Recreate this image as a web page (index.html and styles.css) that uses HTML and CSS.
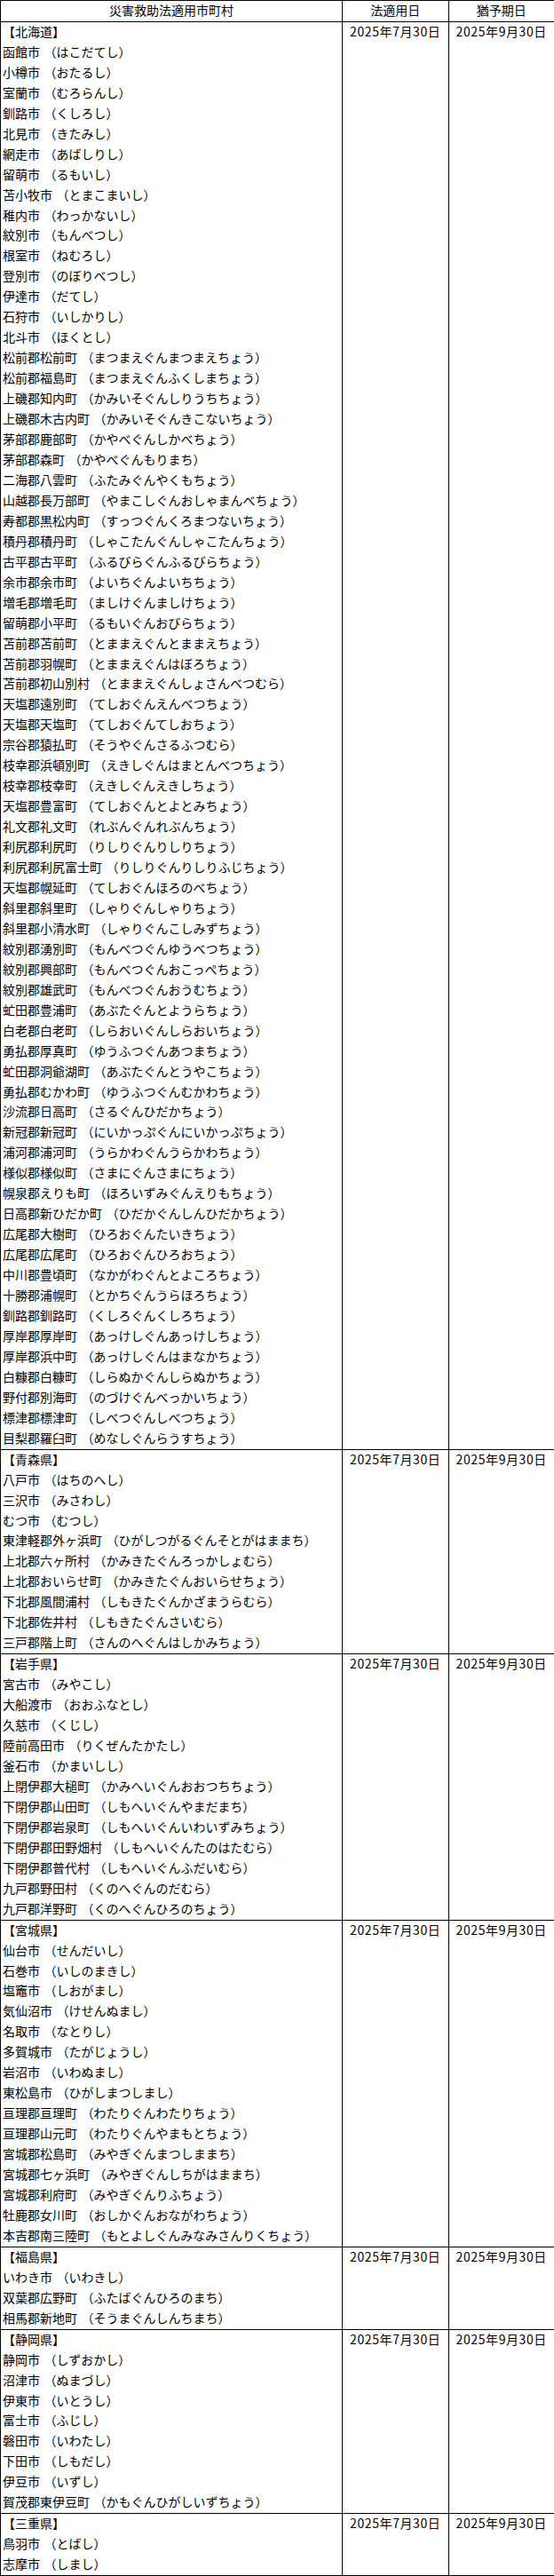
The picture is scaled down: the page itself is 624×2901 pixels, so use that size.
FILE: index.html
```html
<!DOCTYPE html>
<html lang="ja">
<head>
<meta charset="utf-8">
<title>災害救助法適用市町村</title>
<link rel="stylesheet" href="styles.css">
</head>
<body>
<table class="grid">
  <colgroup>
    <col class="c-name">
    <col class="c-date">
    <col class="c-date">
  </colgroup>
  <thead>
    <tr>
      <th>災害救助法適用市町村</th>
      <th>法適用日</th>
      <th>猶予期日</th>
    </tr>
  </thead>
  <tbody>
    <tr>
      <td class="names">
        <div class="pref">【北海道】</div>
        <div>函館市 （はこだてし）</div>
        <div>小樽市 （おたるし）</div>
        <div>室蘭市 （むろらんし）</div>
        <div>釧路市 （くしろし）</div>
        <div>北見市 （きたみし）</div>
        <div>網走市 （あばしりし）</div>
        <div>留萌市 （るもいし）</div>
        <div>苫小牧市 （とまこまいし）</div>
        <div>稚内市 （わっかないし）</div>
        <div>紋別市 （もんべつし）</div>
        <div>根室市 （ねむろし）</div>
        <div>登別市 （のぼりべつし）</div>
        <div>伊達市 （だてし）</div>
        <div>石狩市 （いしかりし）</div>
        <div>北斗市 （ほくとし）</div>
        <div>松前郡松前町 （まつまえぐんまつまえちょう）</div>
        <div>松前郡福島町 （まつまえぐんふくしまちょう）</div>
        <div>上磯郡知内町 （かみいそぐんしりうちちょう）</div>
        <div>上磯郡木古内町 （かみいそぐんきこないちょう）</div>
        <div>茅部郡鹿部町 （かやべぐんしかべちょう）</div>
        <div>茅部郡森町 （かやべぐんもりまち）</div>
        <div>二海郡八雲町 （ふたみぐんやくもちょう）</div>
        <div>山越郡長万部町 （やまこしぐんおしゃまんべちょう）</div>
        <div>寿都郡黒松内町 （すっつぐんくろまつないちょう）</div>
        <div>積丹郡積丹町 （しゃこたんぐんしゃこたんちょう）</div>
        <div>古平郡古平町 （ふるびらぐんふるびらちょう）</div>
        <div>余市郡余市町 （よいちぐんよいちちょう）</div>
        <div>増毛郡増毛町 （ましけぐんましけちょう）</div>
        <div>留萌郡小平町 （るもいぐんおびらちょう）</div>
        <div>苫前郡苫前町 （とままえぐんとままえちょう）</div>
        <div>苫前郡羽幌町 （とままえぐんはぼろちょう）</div>
        <div>苫前郡初山別村 （とままえぐんしょさんべつむら）</div>
        <div>天塩郡遠別町 （てしおぐんえんべつちょう）</div>
        <div>天塩郡天塩町 （てしおぐんてしおちょう）</div>
        <div>宗谷郡猿払町 （そうやぐんさるふつむら）</div>
        <div>枝幸郡浜頓別町 （えきしぐんはまとんべつちょう）</div>
        <div>枝幸郡枝幸町 （えきしぐんえきしちょう）</div>
        <div>天塩郡豊富町 （てしおぐんとよとみちょう）</div>
        <div>礼文郡礼文町 （れぶんぐんれぶんちょう）</div>
        <div>利尻郡利尻町 （りしりぐんりしりちょう）</div>
        <div>利尻郡利尻富士町 （りしりぐんりしりふじちょう）</div>
        <div>天塩郡幌延町 （てしおぐんほろのべちょう）</div>
        <div>斜里郡斜里町 （しゃりぐんしゃりちょう）</div>
        <div>斜里郡小清水町 （しゃりぐんこしみずちょう）</div>
        <div>紋別郡湧別町 （もんべつぐんゆうべつちょう）</div>
        <div>紋別郡興部町 （もんべつぐんおこっぺちょう）</div>
        <div>紋別郡雄武町 （もんべつぐんおうむちょう）</div>
        <div>虻田郡豊浦町 （あぶたぐんとようらちょう）</div>
        <div>白老郡白老町 （しらおいぐんしらおいちょう）</div>
        <div>勇払郡厚真町 （ゆうふつぐんあつまちょう）</div>
        <div>虻田郡洞爺湖町 （あぶたぐんとうやこちょう）</div>
        <div>勇払郡むかわ町 （ゆうふつぐんむかわちょう）</div>
        <div>沙流郡日高町 （さるぐんひだかちょう）</div>
        <div>新冠郡新冠町 （にいかっぷぐんにいかっぷちょう）</div>
        <div>浦河郡浦河町 （うらかわぐんうらかわちょう）</div>
        <div>様似郡様似町 （さまにぐんさまにちょう）</div>
        <div>幌泉郡えりも町 （ほろいずみぐんえりもちょう）</div>
        <div>日高郡新ひだか町 （ひだかぐんしんひだかちょう）</div>
        <div>広尾郡大樹町 （ひろおぐんたいきちょう）</div>
        <div>広尾郡広尾町 （ひろおぐんひろおちょう）</div>
        <div>中川郡豊頃町 （なかがわぐんとよころちょう）</div>
        <div>十勝郡浦幌町 （とかちぐんうらほろちょう）</div>
        <div>釧路郡釧路町 （くしろぐんくしろちょう）</div>
        <div>厚岸郡厚岸町 （あっけしぐんあっけしちょう）</div>
        <div>厚岸郡浜中町 （あっけしぐんはまなかちょう）</div>
        <div>白糠郡白糠町 （しらぬかぐんしらぬかちょう）</div>
        <div>野付郡別海町 （のづけぐんべっかいちょう）</div>
        <div>標津郡標津町 （しべつぐんしべつちょう）</div>
        <div>目梨郡羅臼町 （めなしぐんらうすちょう）</div>
      </td>
      <td class="date">2025年7月30日</td>
      <td class="date">2025年9月30日</td>
    </tr>
    <tr>
      <td class="names">
        <div class="pref">【青森県】</div>
        <div>八戸市 （はちのへし）</div>
        <div>三沢市 （みさわし）</div>
        <div>むつ市 （むつし）</div>
        <div>東津軽郡外ヶ浜町 （ひがしつがるぐんそとがはままち）</div>
        <div>上北郡六ヶ所村 （かみきたぐんろっかしょむら）</div>
        <div>上北郡おいらせ町 （かみきたぐんおいらせちょう）</div>
        <div>下北郡風間浦村 （しもきたぐんかざまうらむら）</div>
        <div>下北郡佐井村 （しもきたぐんさいむら）</div>
        <div>三戸郡階上町 （さんのへぐんはしかみちょう）</div>
      </td>
      <td class="date">2025年7月30日</td>
      <td class="date">2025年9月30日</td>
    </tr>
    <tr>
      <td class="names">
        <div class="pref">【岩手県】</div>
        <div>宮古市 （みやこし）</div>
        <div>大船渡市 （おおふなとし）</div>
        <div>久慈市 （くじし）</div>
        <div>陸前高田市 （りくぜんたかたし）</div>
        <div>釜石市 （かまいしし）</div>
        <div>上閉伊郡大槌町 （かみへいぐんおおつちちょう）</div>
        <div>下閉伊郡山田町 （しもへいぐんやまだまち）</div>
        <div>下閉伊郡岩泉町 （しもへいぐんいわいずみちょう）</div>
        <div>下閉伊郡田野畑村 （しもへいぐんたのはたむら）</div>
        <div>下閉伊郡普代村 （しもへいぐんふだいむら）</div>
        <div>九戸郡野田村 （くのへぐんのだむら）</div>
        <div>九戸郡洋野町 （くのへぐんひろのちょう）</div>
      </td>
      <td class="date">2025年7月30日</td>
      <td class="date">2025年9月30日</td>
    </tr>
    <tr>
      <td class="names">
        <div class="pref">【宮城県】</div>
        <div>仙台市 （せんだいし）</div>
        <div>石巻市 （いしのまきし）</div>
        <div>塩竈市 （しおがまし）</div>
        <div>気仙沼市 （けせんぬまし）</div>
        <div>名取市 （なとりし）</div>
        <div>多賀城市 （たがじょうし）</div>
        <div>岩沼市 （いわぬまし）</div>
        <div>東松島市 （ひがしまつしまし）</div>
        <div>亘理郡亘理町 （わたりぐんわたりちょう）</div>
        <div>亘理郡山元町 （わたりぐんやまもとちょう）</div>
        <div>宮城郡松島町 （みやぎぐんまつしままち）</div>
        <div>宮城郡七ヶ浜町 （みやぎぐんしちがはままち）</div>
        <div>宮城郡利府町 （みやぎぐんりふちょう）</div>
        <div>牡鹿郡女川町 （おしかぐんおながわちょう）</div>
        <div>本吉郡南三陸町 （もとよしぐんみなみさんりくちょう）</div>
      </td>
      <td class="date">2025年7月30日</td>
      <td class="date">2025年9月30日</td>
    </tr>
    <tr>
      <td class="names">
        <div class="pref">【福島県】</div>
        <div>いわき市 （いわきし）</div>
        <div>双葉郡広野町 （ふたばぐんひろのまち）</div>
        <div>相馬郡新地町 （そうまぐんしんちまち）</div>
      </td>
      <td class="date">2025年7月30日</td>
      <td class="date">2025年9月30日</td>
    </tr>
    <tr>
      <td class="names">
        <div class="pref">【静岡県】</div>
        <div>静岡市 （しずおかし）</div>
        <div>沼津市 （ぬまづし）</div>
        <div>伊東市 （いとうし）</div>
        <div>富士市 （ふじし）</div>
        <div>磐田市 （いわたし）</div>
        <div>下田市 （しもだし）</div>
        <div>伊豆市 （いずし）</div>
        <div>賀茂郡東伊豆町 （かもぐんひがしいずちょう）</div>
      </td>
      <td class="date">2025年7月30日</td>
      <td class="date">2025年9月30日</td>
    </tr>
    <tr>
      <td class="names">
        <div class="pref">【三重県】</div>
        <div>鳥羽市 （とばし）</div>
        <div>志摩市 （しまし）</div>
      </td>
      <td class="date">2025年7月30日</td>
      <td class="date">2025年9月30日</td>
    </tr>
  </tbody>
</table>
</body>
</html>
```

FILE: styles.css
```css
html, body {
  margin: 0;
  padding: 0;
  background: #fff;
}

body {
  font-family: "DejaVu Sans", "Noto Sans CJK JP", sans-serif;
  font-size: 14px;
  line-height: 22.95px;
  color: #000;
}

.grid {
  width: 624px;
  border-collapse: collapse;
  table-layout: fixed;
}

.c-name {
  width: 385px;
}

.c-date {
  width: 119.5px;
}

.grid th,
.grid td {
  border: 1px solid #000;
  padding: 0 2px;
  vertical-align: top;
}

.grid th {
  font-weight: normal;
  text-align: center;
}

.names {
  text-align: left;
  white-space: nowrap;
}

.date {
  font-family: "Noto Sans CJK JP", sans-serif;
  line-height: 20.4px;
  letter-spacing: 0.6px;
  text-align: center;
  white-space: nowrap;
}
```
